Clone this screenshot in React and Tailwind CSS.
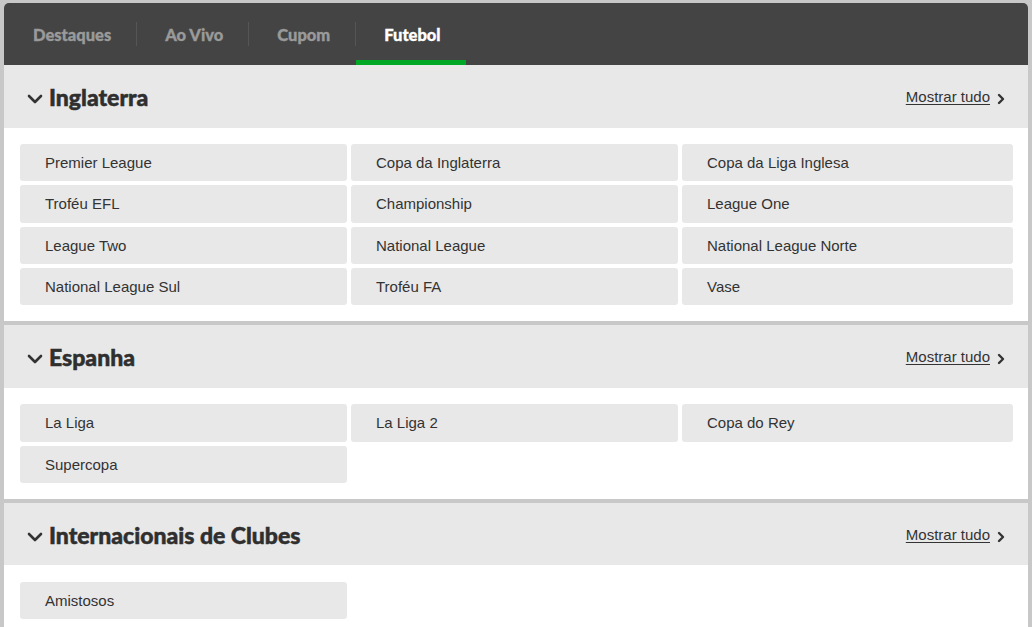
const tabs = ["Destaques", "Ao Vivo", "Cupom", "Futebol"];

const sections = [
  {
    title: "Inglaterra",
    items: [
      "Premier League",
      "Copa da Inglaterra",
      "Copa da Liga Inglesa",
      "Troféu EFL",
      "Championship",
      "League One",
      "League Two",
      "National League",
      "National League Norte",
      "National League Sul",
      "Troféu FA",
      "Vase",
    ],
  },
  {
    title: "Espanha",
    items: ["La Liga", "La Liga 2", "Copa do Rey", "Supercopa"],
  },
  {
    title: "Internacionais de Clubes",
    items: ["Amistosos"],
  },
];

const Section = ({ title, items }) => (
  <section className="bg-white">
    <div className="flex h-[62.5px] items-center justify-between bg-[#e8e8e8] pl-[22px] pr-[22px] pt-[2px]">
      <div className="flex items-center gap-[5px]">
        <svg width="18" height="12" viewBox="0 0 18 12" className="mt-[3px]">
          <polyline points="3,3 9,9 15,3" fill="none" stroke="#333" strokeWidth="2.6" strokeLinecap="round" strokeLinejoin="round" />
        </svg>
        <h2 className="font-['Lato'] text-[23px] font-black text-[#2f2f2f] [-webkit-text-stroke:0.5px_#2f2f2f]">
          {title}
        </h2>
      </div>
      <a className="flex items-center gap-[6px] font-['Liberation_Sans'] text-[15px] text-[#333] underline underline-offset-2">
        Mostrar tudo
        <svg width="10" height="14" viewBox="0 0 10 14" className="mt-[3px]">
          <polyline points="3,3 7,7 3,11" fill="none" stroke="#333" strokeWidth="2.4" strokeLinecap="round" strokeLinejoin="round" />
        </svg>
      </a>
    </div>
    <div className="grid grid-cols-[327px_327px_1fr] gap-1 pb-4 pl-4 pr-[15px] pt-[16.5px]">
      {items.map((item) => (
        <div
          key={item}
          className="flex h-[37.33px] items-center rounded-[3px] bg-[#e8e8e8] pl-[25px] pt-px font-['Liberation_Sans'] text-[15px] text-[#333]"
        >
          {item}
        </div>
      ))}
    </div>
  </section>
);

export default function App() {
  return (
    <div className="min-h-screen bg-[#c8c8c8] pl-1 pr-1 pt-[3px]">
      <nav className="flex h-[62px] items-stretch rounded-t-[5px] bg-[#444] pl-px">
        {tabs.map((tab, i) => {
          const active = tab === "Futebol";
          return (
            <div key={tab} className="flex items-center">
              {i > 0 && <div className="h-[24px] w-px bg-[#555]" />}
              <div
                className={`relative flex h-full items-center pl-[28px] pr-[25px] pt-[3px] font-['Lato'] text-[16.5px] font-black [-webkit-text-stroke:0.35px_currentColor] ${
                  active ? "text-white" : "text-[#9a9a9a]"
                }`}
              >
                {tab}
                {active && <span className="absolute bottom-0 left-0 right-0 h-[5px] bg-[#00a826]" />}
              </div>
            </div>
          );
        })}
      </nav>
      <div className="flex flex-col gap-1">
        {sections.map((s) => (
          <Section key={s.title} {...s} />
        ))}
      </div>
    </div>
  );
}
